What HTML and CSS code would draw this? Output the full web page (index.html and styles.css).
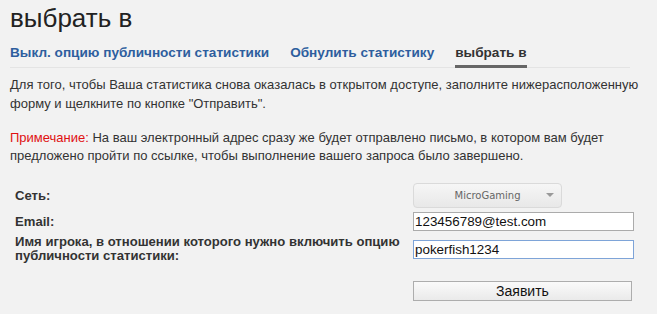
FILE: index.html
```html
<!DOCTYPE html>
<html lang="ru">
<head>
    <meta charset="UTF-8">
    <title>выбрать в</title>
    <link rel="stylesheet" href="styles.css">
</head>
<body>
    <div class="page">
        <h1 class="title">выбрать в</h1>

        <div class="tabs">
            <a class="tab" href="#">Выкл. опцию публичности статистики</a>
            <a class="tab" href="#">Обнулить статистику</a>
            <a class="tab active" href="#">выбрать в</a>
        </div>

        <p class="text">Для того, чтобы Ваша статистика снова оказалась в открытом доступе, заполните нижерасположенную форму и щелкните по кнопке "Отправить".</p>

        <p class="text note"><span class="note-label">Примечание:</span> На ваш электронный адрес сразу же будет отправлено письмо, в котором вам будет предложено пройти по ссылке, чтобы выполнение вашего запроса было завершено.</p>

        <form class="form">
            <label class="label">Сеть:</label>
            <div class="select">
                <span>MicroGaming</span>
                <span class="arrow"></span>
            </div>

            <label class="label">Email:</label>
            <input class="field" type="text" value="123456789@test.com">

            <label class="label">Имя игрока, в отношении которого нужно включить опцию публичности статистики:</label>
            <input class="field focused" type="text" value="pokerfish1234">

            <div></div>
            <button class="submit" type="button">Заявить</button>
        </form>
    </div>
</body>
</html>
```

FILE: styles.css
```css
body {
    margin: 0;
    background-color: #F2F2F2;
    font-family: 'Liberation Sans', Arial, sans-serif;
    color: #333;
}

.page {
    padding: 0 10px;
}

.title {
    margin: 0;
    padding-top: 2px;
    font-size: 26px;
    font-weight: normal;
    line-height: 32px;
    color: #222;
}

.tabs {
    display: flex;
    gap: 21px;
    margin: 11px 17px 0 0;
    border-bottom: 1px solid #E4E4E4;
}

.tab {
    font-size: 13.6px;
    font-weight: bold;
    color: #2E5E9E;
    text-decoration: none;
    padding-bottom: 5px;
    border-bottom: 3px solid transparent;
    margin-bottom: -1px;
}

.tab.active {
    color: #333;
    border-bottom-color: #666;
}

.text {
    margin: 7px 0 0;
    font-size: 13px;
    line-height: 19px;
    color: #333;
}

.note {
    margin-top: 16px;
    line-height: 18px;
}

.note-label {
    color: #E01010;
}

.form {
    display: grid;
    grid-template-columns: 398px 221px;
    align-items: center;
    row-gap: 4px;
    margin: 18px 0 0 5px;
}

.label {
    font-size: 13.1px;
    font-weight: bold;
    line-height: 14px;
    color: #333;
}

.select {
    position: relative;
    width: 149px;
    height: 25px;
    border: 1px solid #DADADA;
    border-radius: 4px;
    background: linear-gradient(#F6F6F6, #E8E8E8);
    font-family: 'DejaVu Sans', Verdana, sans-serif;
    font-size: 10px;
    color: #666;
    display: flex;
    align-items: center;
    justify-content: center;
    box-sizing: border-box;
}

.arrow {
    position: absolute;
    right: 7px;
    top: 9px;
    border-left: 4px solid transparent;
    border-right: 4px solid transparent;
    border-top: 4px solid #999;
}

.field {
    width: 221px;
    height: 19px;
    box-sizing: border-box;
    border: 1px solid #ABABAB;
    background: #FFF;
    padding: 0 1px;
    margin: 0;
    font-family: 'Liberation Sans', Arial, sans-serif;
    font-size: 13.4px;
    color: #111;
}

.field.focused {
    border-color: #7EA4D8;
}

.submit {
    margin-top: 14px;
    width: 219px;
    height: 20px;
    border: 1px solid #ADADAD;
    background: linear-gradient(#FAFAFA, #EAEAEA);
    font-family: 'Liberation Sans', Arial, sans-serif;
    font-size: 14px;
    color: #111;
    padding: 0;
}
```
